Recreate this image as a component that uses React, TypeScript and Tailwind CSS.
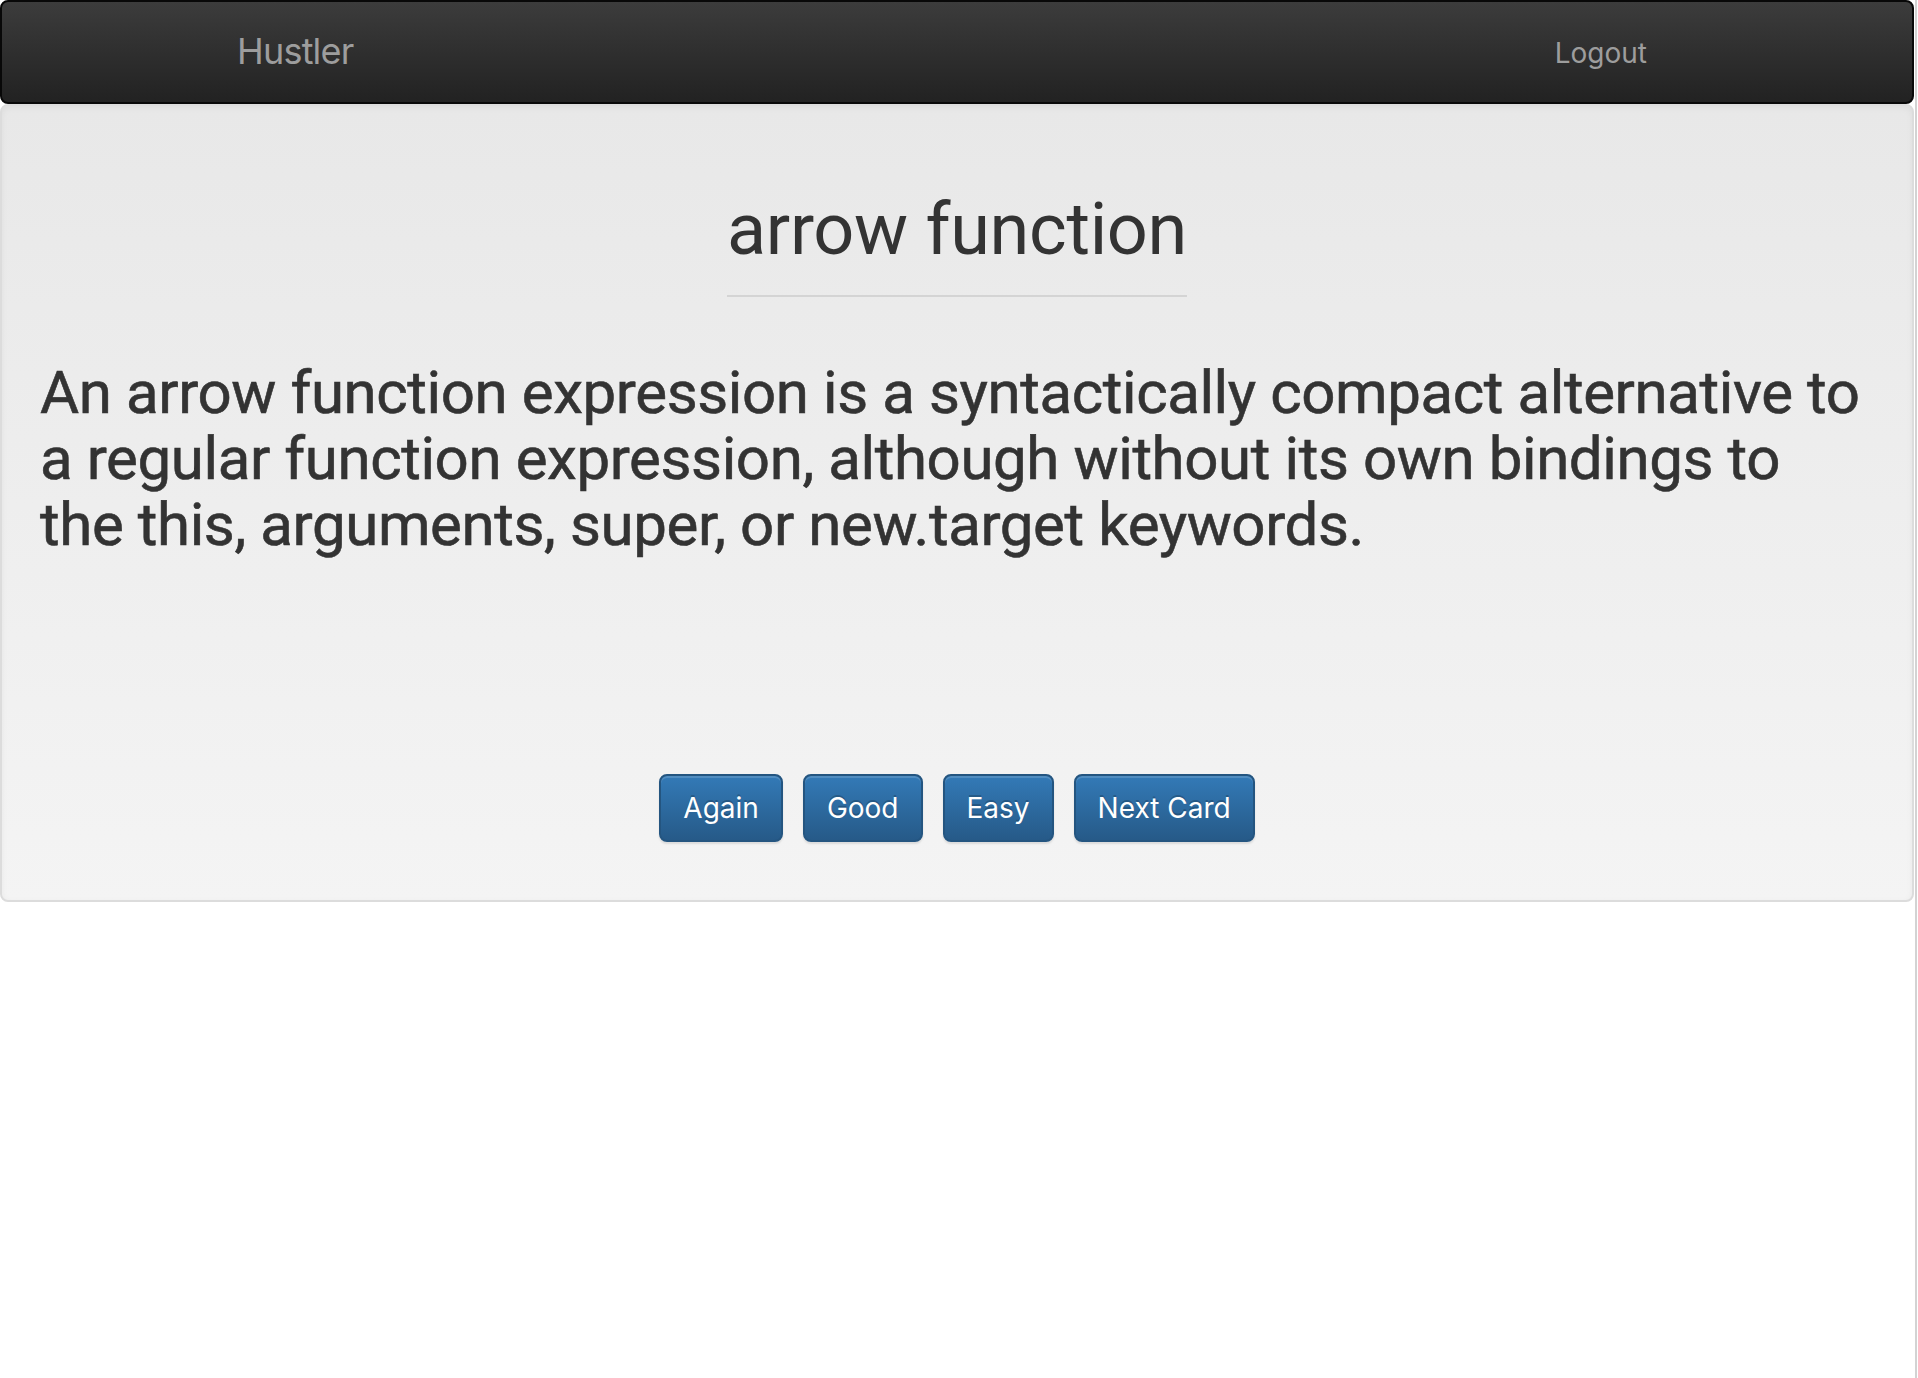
import React from 'react';

const buttons = ['Again', 'Good', 'Easy', 'Next Card'];

const App = () => {
  return (
    <div className="flex min-h-[1378px] w-[1918px] bg-white font-['Inter',sans-serif]">
      <div className="w-[1914px]">
        {/* navbar */}
        <nav className="h-[104px] rounded-[8px] border-2 border-[#080808] bg-gradient-to-b from-[#3c3c3c] to-[#222222]">
          <div className="mx-auto flex h-full w-[1500px] items-center justify-between px-[30px]">
            <a className="pb-[2px] text-[36px] leading-none text-[#9d9d9d] tracking-[-0.8px]">Hustler</a>
            <a className="mr-[30px] pt-[2px] text-[28px] leading-none text-[#9d9d9d]">Logout</a>
          </div>
        </nav>

        {/* card */}
        <section className="rounded-[8px] border-2 border-[#dcdcdc] bg-gradient-to-b from-[#e8e8e8] to-[#f4f4f4] px-[38px] pb-[58px] pt-[84px] font-['Roboto',sans-serif] shadow-[inset_0_2px_6px_rgba(0,0,0,0.05)]">
          <div className="text-center">
            <h1 className="inline-block border-b-2 border-[#d4d4d4] pb-[26px] text-[72px] leading-[79px] font-normal tracking-[-0.3px] text-[#333333]">
              arrow function
            </h1>
          </div>
          <h2 className="mt-[63px] text-[60px] leading-[66px] font-normal tracking-[-0.4px] text-[#333333] [-webkit-text-stroke:0.6px_#333333]">
            An arrow function expression is a syntactically compact alternative to a regular function expression, although without its own bindings to the this, arguments, super, or new.target keywords.
          </h2>
          <div className="mt-[216px] flex justify-center gap-[20px] font-['Inter',sans-serif]">
            {buttons.map(label => (
              <button
                key={label}
                className="h-[68px] rounded-[8px] border-2 border-[#245580] bg-gradient-to-b from-[#337ab7] to-[#265a88] px-[22px] text-[28px] leading-none text-white shadow-[inset_0_2px_0_rgba(255,255,255,0.15),0_2px_2px_rgba(0,0,0,0.1)] [text-shadow:0_-2px_0_rgba(0,0,0,0.2)]"
              >
                {label}
              </button>
            ))}
          </div>
        </section>
      </div>
      <div className="w-[4px] pl-[1px]">
        <div className="h-full w-[2px] bg-[#d3d3d3]"></div>
      </div>
    </div>
  );
};

export default App;
